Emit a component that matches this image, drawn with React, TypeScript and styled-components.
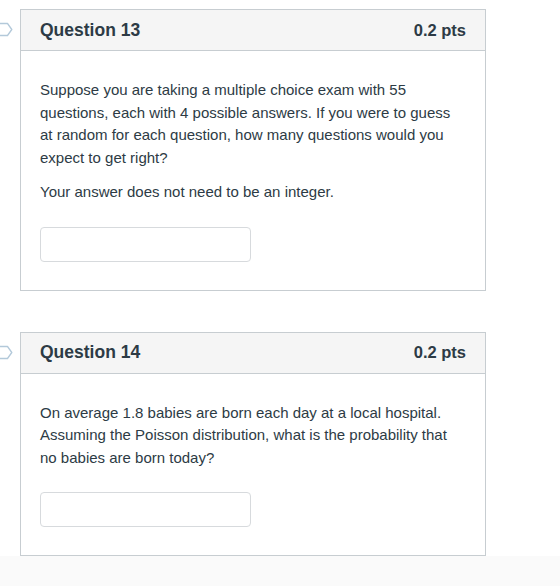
import React, { FC } from 'react';
import styled, { createGlobalStyle } from 'styled-components';

const GlobalStyle = createGlobalStyle`
  html, body {
    margin: 0;
    padding: 0;
    background: #fff;
  }
  body {
    font-family: "Liberation Sans", Arial, Helvetica, sans-serif;
    color: #2d3b45;
  }
`;

const Page = styled.div`
  width: 560px;
  min-height: 586px;
  display: flex;
  flex-direction: column;
`;

const Questions = styled.div`
  padding: 9px 0 0 20px;
  display: flex;
  flex-direction: column;
  gap: 41px;
`;

const QuestionWrap = styled.div`
  position: relative;
  width: 466px;
`;

const Flag = styled.svg`
  position: absolute;
  left: -20px;
  top: 13px;
  width: 13px;
  height: 15px;
`;

const Card = styled.div`
  border: 1px solid #c7cdd1;
  background: #fff;
`;

const Header = styled.div`
  height: 40px;
  padding: 0 19px;
  display: flex;
  align-items: center;
  justify-content: space-between;
  background: #f5f5f5;
  border-bottom: 1px solid #c7cdd1;
  font-weight: 700;
`;

const Title = styled.div`
  font-size: 17.5px;
`;

const Points = styled.div`
  font-size: 16.5px;
  color: #2d3b45;
`;

const Body = styled.div`
  padding: 28px 19px 28px;
  font-size: 15px;
  line-height: 22.5px;

  p {
    margin: 0 0 12px;
  }
`;

const AnswerInput = styled.input`
  display: block;
  box-sizing: border-box;
  width: 211px;
  height: 35px;
  margin-top: ${(p: { $gap: number }) => p.$gap}px;
  border: 1px solid #d7dadd;
  border-radius: 4px;
  background: #fff;
  outline: none;
`;

const Footer = styled.div`
  flex: 1;
  margin-top: 0;
  background: #fafafa;
`;

const Question: FC<any> = ({ num, pts, paragraphs }) => {
  return (
    <QuestionWrap>
      <Flag viewBox="0 0 13 15">
        <path
          d="M-2 1.5 H7.5 L11.8 7.5 L7.5 13.5 H-2"
          fill="none"
          stroke="#b3c9da"
          strokeWidth="1.3"
          strokeLinejoin="round"
        />
      </Flag>
      <Card>
        <Header>
          <Title>Question {num}</Title>
          <Points>{pts} pts</Points>
        </Header>
        <Body>
          {paragraphs.map((t: string, i: number) => (
            <p key={i} style={i === paragraphs.length - 1 ? { marginBottom: 0 } : undefined}>
              {t}
            </p>
          ))}
          <AnswerInput type="text" $gap={23} />
        </Body>
      </Card>
    </QuestionWrap>
  );
};

const App: FC = () => {
  return (
    <Page>
      <GlobalStyle />
      <Questions>
        <Question
          num={13}
          pts="0.2"
          paragraphs={[
            'Suppose you are taking a multiple choice exam with 55 questions, each with 4 possible answers. If you were to guess at random for each question, how many questions would you expect to get right?',
            'Your answer does not need to be an integer.',
          ]}
        />
        <Question
          num={14}
          pts="0.2"
          paragraphs={[
            'On average 1.8 babies are born each day at a local hospital. Assuming the Poisson distribution, what is the probability that no babies are born today?',
          ]}
        />
      </Questions>
      <Footer />
    </Page>
  );
};

export default App;
